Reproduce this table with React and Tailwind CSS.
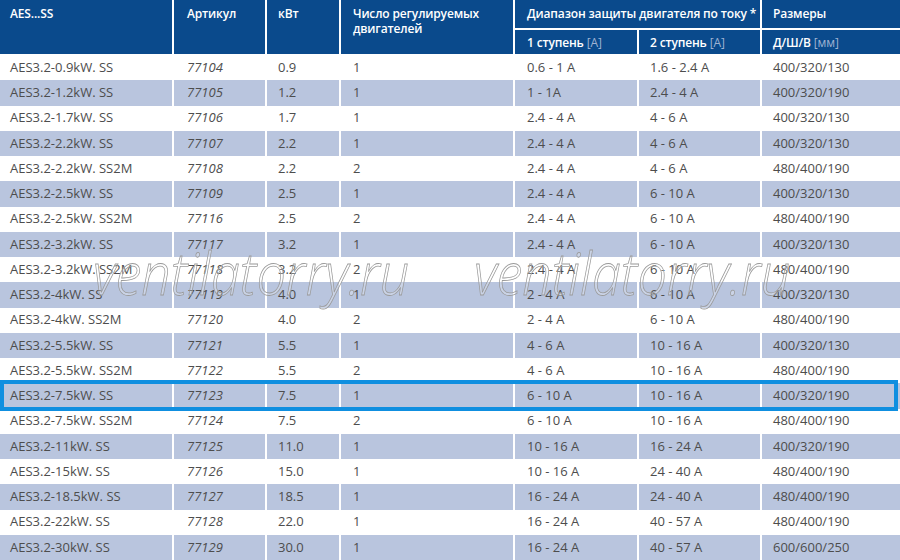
import React from 'react';

// строки таблицы AES...SS
const rows = [
  ['AES3.2-0.9kW. SS', '77104', '0.9', '1', '0.6 - 1 A', '1.6 - 2.4 A', '400/320/130'],
  ['AES3.2-1.2kW. SS', '77105', '1.2', '1', '1 - 1A', '2.4 - 4 A', '400/320/190'],
  ['AES3.2-1.7kW. SS', '77106', '1.7', '1', '2.4 - 4 A', '4 - 6 A', '400/320/130'],
  ['AES3.2-2.2kW. SS', '77107', '2.2', '1', '2.4 - 4 A', '4 - 6 A', '400/320/130'],
  ['AES3.2-2.2kW. SS2M', '77108', '2.2', '2', '2.4 - 4 A', '4 - 6 A', '480/400/190'],
  ['AES3.2-2.5kW. SS', '77109', '2.5', '1', '2.4 - 4 A', '6 - 10 A', '400/320/130'],
  ['AES3.2-2.5kW. SS2M', '77116', '2.5', '2', '2.4 - 4 A', '6 - 10 A', '480/400/190'],
  ['AES3.2-3.2kW. SS', '77117', '3.2', '1', '2.4 - 4 A', '6 - 10 A', '400/320/130'],
  ['AES3.2-3.2kW. SS2M', '77118', '3.2', '2', '2.4 - 4 A', '6 - 10 A', '480/400/190'],
  ['AES3.2-4kW. SS', '77119', '4.0', '1', '2 - 4 A', '6 - 10 A', '400/320/130'],
  ['AES3.2-4kW. SS2M', '77120', '4.0', '2', '2 - 4 A', '6 - 10 A', '480/400/190'],
  ['AES3.2-5.5kW. SS', '77121', '5.5', '1', '4 - 6 A', '10 - 16 A', '400/320/130'],
  ['AES3.2-5.5kW. SS2M', '77122', '5.5', '2', '4 - 6 A', '10 - 16 A', '480/400/190'],
  ['AES3.2-7.5kW. SS', '77123', '7.5', '1', '6 - 10 A', '10 - 16 A', '400/320/190'],
  ['AES3.2-7.5kW. SS2M', '77124', '7.5', '2', '6 - 10 A', '10 - 16 A', '480/400/190'],
  ['AES3.2-11kW. SS', '77125', '11.0', '1', '10 - 16 A', '16 - 24 A', '400/320/190'],
  ['AES3.2-15kW. SS', '77126', '15.0', '1', '10 - 16 A', '24 - 40 A', '480/400/190'],
  ['AES3.2-18.5kW. SS', '77127', '18.5', '1', '16 - 24 A', '24 - 40 A', '480/400/190'],
  ['AES3.2-22kW. SS', '77128', '22.0', '1', '16 - 24 A', '40 - 57 A', '480/400/190'],
  ['AES3.2-30kW. SS', '77129', '30.0', '1', '16 - 24 A', '40 - 57 A', '600/600/250'],
];

const cols = 'grid grid-cols-[172px_91px_72px_172px_122px_121px_1fr] gap-x-[2px]';

function Watermark({ className }) {
  return (
    <div
      className={`absolute z-20 pointer-events-none origin-left scale-x-90 whitespace-nowrap italic text-[58px] leading-none text-white/25 [-webkit-text-stroke:0.8px_#9a9a9a] ${className}`}
      style={{ fontFamily: '"Open Sans", sans-serif', fontWeight: 300 }}
    >
      ventilatorry.ru
    </div>
  );
}

export default function App() {
  return (
    <div
      className="relative w-[900px] h-[560px] overflow-hidden bg-white text-[13px] text-[#4d4d4d]"
      style={{ fontFamily: '"Open Sans", sans-serif' }}
    >
      {/* ШАПКА */}
      <div className={`${cols} grid-rows-[28px_24px] gap-y-[2px] h-[55px] bg-white font-semibold text-white text-[12px] tracking-[-0.15px] leading-[15px] whitespace-nowrap`}>
        <div className="row-span-2 bg-[#0a4a8c] pl-[10px] pt-[6px]">AES...SS</div>
        <div className="row-span-2 bg-[#0a4a8c] pl-[13px] pt-[6px]">Артикул</div>
        <div className="row-span-2 bg-[#0a4a8c] pl-[11px] pt-[6px]">кВт</div>
        <div className="row-span-2 bg-[#0a4a8c] pl-[12px] pt-[6px]">
          Число регулируемых
          <br />
          двигателей
        </div>
        <div className="col-span-2 bg-[#0a4a8c] pl-[12px] pt-[6px]">Диапазон защиты двигателя по току *</div>
        <div className="bg-[#0a4a8c] pl-[11px] pt-[6px]">Размеры</div>
        <div className="bg-[#0a4a8c] pl-[12px] flex items-center">
          1 ступень&nbsp;<span className="font-normal text-[#9fb3d3]">[A]</span>
        </div>
        <div className="bg-[#0a4a8c] pl-[11px] flex items-center">
          2 ступень&nbsp;<span className="font-normal text-[#9fb3d3]">[A]</span>
        </div>
        <div className="bg-[#0a4a8c] pl-[11px] flex items-center">
          Д/Ш/В&nbsp;<span className="font-normal text-[#9fb3d3]">[мм]</span>
        </div>
      </div>

      {/* СТРОКИ */}
      {rows.map((r, i) => {
        const cell = i % 2 === 1 ? 'bg-[#b9c5de]' : 'bg-white';
        return (
          <div key={r[1]} className={`${cols} relative h-[25.25px]`}>
            <div className={`${cell} pl-[10px] flex items-center`}>{r[0]}</div>
            <div className={`${cell} pl-[13px] flex items-center italic`}>{r[1]}</div>
            <div className={`${cell} pl-[11px] flex items-center`}>{r[2]}</div>
            <div className={`${cell} pl-[12px] flex items-center`}>{r[3]}</div>
            <div className={`${cell} pl-[12px] flex items-center`}>{r[4]}</div>
            <div className={`${cell} pl-[11px] flex items-center`}>{r[5]}</div>
            <div className={`${cell} pl-[11px] flex items-center`}>{r[6]}</div>
            {i === 13 && (
              <div className="absolute z-10 left-0 right-[2px] top-[-3px] bottom-[-2px] border-[4px] border-solid border-[#0f8fe0]" />
            )}
          </div>
        );
      })}

      <Watermark className="left-[93px] top-[244px]" />
      <Watermark className="left-[474px] top-[244px]" />
    </div>
  );
}
